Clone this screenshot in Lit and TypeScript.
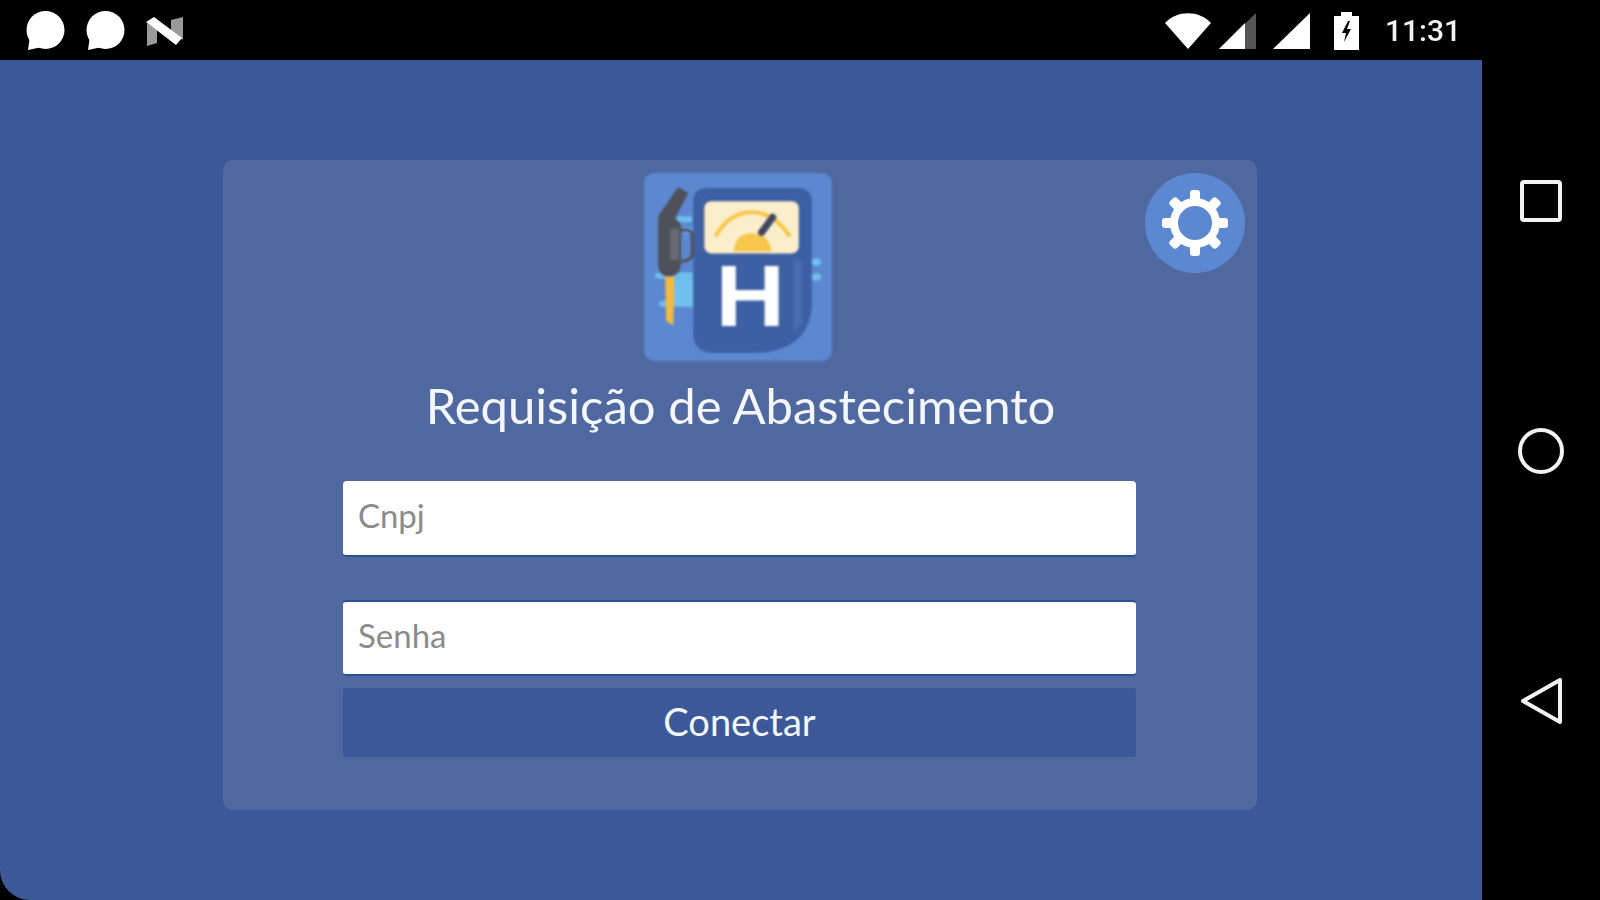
import { LitElement, html, css, svg } from "lit";
import { customElement } from "lit/decorators.js";

const toothAngles = [0, 45, 90, 135, 180, 225, 270, 315];

@customElement("app-root")
export class AppRoot extends LitElement {
  static styles = css`
    :host {
      display: flex;
      flex-direction: column;
      width: 1600px;
      height: 900px;
      overflow: hidden;
      background: #000;
      font-family: "Lato", "Open Sans", sans-serif;
    }

    svg {
      display: block;
      filter: blur(0.7px);
    }

    .status {
      height: 60px;
      flex: none;
      box-sizing: border-box;
      display: flex;
      align-items: center;
      justify-content: space-between;
      padding: 2px 139px 0 25px;
    }

    .group {
      display: flex;
      align-items: center;
    }

    .bubble {
      margin-right: 19px;
    }

    .wifi {
      margin-right: 8px;
    }

    .signal {
      margin-right: 17px;
    }

    .signal.last {
      margin-right: 24px;
    }

    .battery {
      margin-right: 26px;
    }

    .time {
      color: #f2f2f2;
      font: 500 30px/1 "Roboto", sans-serif;
      filter: blur(0.5px);
    }

    .body {
      flex: 1;
      display: flex;
      min-height: 0;
    }

    .screen {
      width: 1482px;
      flex: none;
      box-sizing: border-box;
      padding: 100px 2px 0 0;
      display: flex;
      justify-content: center;
      align-items: flex-start;
      background: #3b5998;
      border-bottom-left-radius: 30px;
    }

    .card {
      position: relative;
      width: 1034px;
      height: 650px;
      box-sizing: border-box;
      padding: 13px 121px 0 120px;
      display: flex;
      flex-direction: column;
      align-items: center;
      background: #4f689f;
      border-radius: 10px;
    }

    .logo {
      margin-left: -4px;
      filter: blur(0.8px);
    }

    .settings {
      position: absolute;
      top: 13px;
      right: 12px;
      width: 100px;
      height: 100px;
      border-radius: 50%;
      background: #5b88d0;
      display: flex;
      align-items: center;
      justify-content: center;
    }

    h1 {
      margin: 14px 0 0 2px;
      color: #f3f6fb;
      font-size: 49px;
      line-height: 60px;
      font-weight: 400;
      white-space: nowrap;
      filter: blur(0.4px);
    }

    .field {
      display: block;
      width: 100%;
      height: 76px;
      box-sizing: border-box;
      padding: 0 15px 6px;
      border: none;
      border-bottom: 2px solid #2c4f92;
      border-radius: 4px;
      background: #fff;
      font: 400 33px "Lato", sans-serif;
      outline: none;
    }

    .field::placeholder {
      color: #8b8b8b;
      opacity: 1;
    }

    .cnpj {
      margin-top: 46px;
    }

    .senha {
      margin-top: 43px;
      border-top: 2px solid #2c4f92;
    }

    .connect {
      width: 100%;
      height: 69px;
      margin-top: 12px;
      padding: 0 0 4px;
      border: none;
      border-radius: 3px;
      background: #3b5998;
      color: #f3f6fb;
      font: 400 38px "Lato", sans-serif;
    }

    .nav {
      flex: 1;
      display: flex;
      flex-direction: column;
      align-items: center;
      gap: 202px;
      padding-top: 120px;
    }

    .home {
      margin-top: 3px;
    }
  `;

  render() {
    return html`
      <div class="status">
        <div class="group">
          <svg class="bubble" width="41" height="42" viewBox="0 0 41 42" fill="#fff">
            <circle cx="20.5" cy="20" r="19" />
            <path d="M3 40l2-14 12 11z" />
          </svg>
          <svg class="bubble" width="41" height="42" viewBox="0 0 41 42" fill="#fff">
            <circle cx="20.5" cy="20" r="19" />
            <path d="M3 40l2-14 12 11z" />
          </svg>
          <svg width="40" height="30" viewBox="0 0 40 30">
            <path d="M2 7 12 14V27L2 30z" fill="#9a9a9a" />
            <path d="M26 4 38 1V24L26 16z" fill="#9a9a9a" />
            <path d="M1 6 9 1 37 22 31 29z" fill="#fff" />
          </svg>
        </div>
        <div class="group">
          <svg class="wifi" width="46" height="36" viewBox="0 0 46 36" fill="#fff">
            <path d="M0 10C12-3 34-3 46 10L23 36z" />
          </svg>
          <svg class="signal" width="37" height="36" viewBox="0 0 37 36">
            <path d="M0 36 37 0v36z" fill="#555" />
            <path d="M0 36 26 10v26z" fill="#fff" />
          </svg>
          <svg class="signal last" width="37" height="36" viewBox="0 0 37 36" fill="#fff">
            <path d="M0 36 37 0v36z" />
          </svg>
          <svg class="battery" width="25" height="38" viewBox="0 0 25 38">
            <path d="M7 0h11v4h7v34H0V4h7z" fill="#fff" />
            <path d="M14 9 8 21h4l-2 9 7-13h-4l3-8z" fill="#000" />
          </svg>
          <span class="time">11:31</span>
        </div>
      </div>
      <div class="body">
        <div class="screen">
          <div class="card">
            <svg class="logo" width="188" height="188" viewBox="13 13 187 187">
              <rect x="13" y="13" width="187" height="187" rx="10" fill="#5b88d0" />
              <g fill="#6fc0ee">
                <rect x="45" y="56" width="16" height="6" rx="3" />
                <rect x="52" y="68" width="10" height="5" rx="2.5" />
                <rect x="24" y="112" width="38" height="6" rx="3" />
                <rect x="36" y="118" width="26" height="28" />
                <rect x="28" y="140" width="34" height="6" rx="3" />
                <rect x="180" y="98" width="9" height="7" rx="3" />
                <rect x="180" y="113" width="9" height="7" rx="3" />
              </g>
              <path
                d="M62 42q0-14 14-14h90q14 0 14 14v104q-4 46-60 46H82q-20 0-20-20z"
                fill="#3d5fa3"
              />
              <path d="M162 100h8v62l-8 10z" fill="#4a6cb0" />
              <rect x="73" y="41" width="94" height="52" rx="7" fill="#fbeecb" />
              <path d="M84 76q14-24 36-24 22 0 38 24" fill="none" stroke="#f7c64a" stroke-width="4" />
              <path d="M102 91q2-18 18-18 17 0 20 18z" fill="#f7c64a" />
              <path d="M130 72l11-15" stroke="#3d4763" stroke-width="7" stroke-linecap="round" />
              <text
                x="108"
                y="165"
                text-anchor="middle"
                fill="#fff"
                font-family="Liberation Sans"
                font-size="87"
                font-weight="700"
                transform="scale(1.1 1)"
              >H</text>
              <path d="M34 116h9v24l-1 25-7-5z" fill="#f4b93f" />
              <path d="M48 70h8q5 0 5 5v18q0 7-11 8" fill="none" stroke="#50505a" stroke-width="3" />
              <path
                d="M47 27 57 33 44 58Q50 62 50 68V100Q50 116 38 116 27 116 27 103V60Q27 54 31 50z"
                fill="#50505a"
              />
              <rect x="39" y="68" width="9" height="32" rx="4" fill="#6a6a72" />
            </svg>
            <div class="settings">
              <svg width="68" height="68" viewBox="0 0 68 68" fill="#fff">
                <circle cx="34" cy="34" r="21" fill="none" stroke="#fff" stroke-width="8" />
                ${toothAngles.map(
                  (a) =>
                    svg`<rect x="29" y="1" width="10" height="14" rx="3" transform="rotate(${a} 34 34)" />`
                )}
              </svg>
            </div>
            <h1>Requisição de Abastecimento</h1>
            <input class="field cnpj" placeholder="Cnpj" />
            <input class="field senha" placeholder="Senha" />
            <button class="connect">Conectar</button>
          </div>
        </div>
        <div class="nav">
          <svg width="42" height="42" viewBox="0 0 42 42" fill="none" stroke="#f2f2f2" stroke-width="4">
            <rect x="2" y="2" width="38" height="38" rx="2" />
          </svg>
          <svg class="home" width="48" height="48" viewBox="0 0 48 48" fill="none" stroke="#f2f2f2" stroke-width="4">
            <circle cx="24" cy="24" r="21" />
          </svg>
          <svg width="44" height="48" viewBox="0 0 44 48" fill="none" stroke="#f2f2f2" stroke-width="4" stroke-linejoin="round">
            <path d="M41 3v42L4 24z" />
          </svg>
        </div>
      </div>
    `;
  }
}

declare global {
  interface HTMLElementTagNameMap {
    "app-root": AppRoot;
  }
}
